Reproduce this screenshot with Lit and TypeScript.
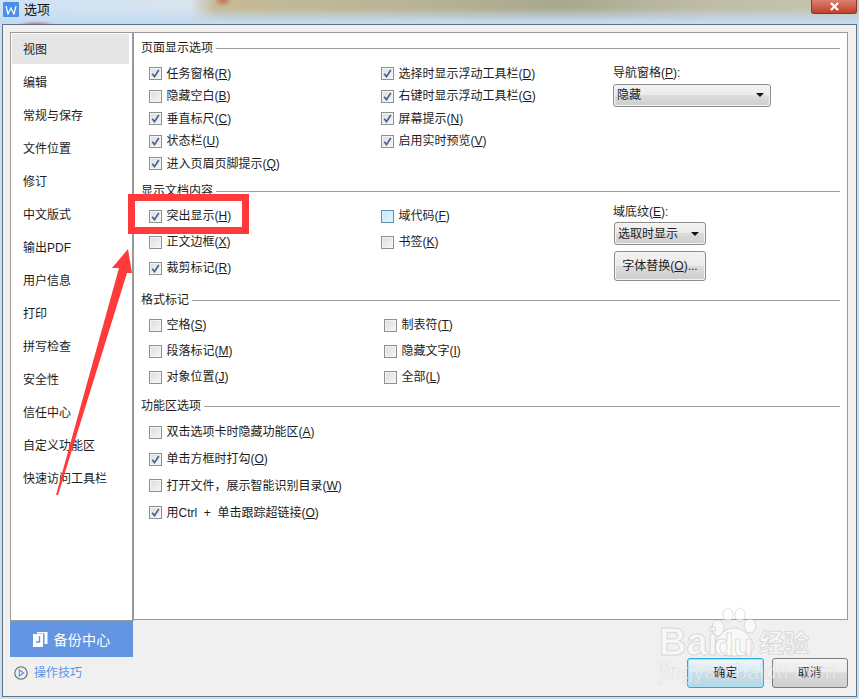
import { LitElement, html, css, nothing } from "lit";
import { customElement } from "lit/decorators.js";

const nav = ["视图","编辑","常规与保存","文件位置","修订","中文版式","输出PDF","用户信息","打印","拼写检查","安全性","信任中心","自定义功能区","快速访问工具栏"];

const check = (label: string, key: string, on: boolean, hover = false) => html`
  <div class="row">
    <span class="cb ${hover ? "hover" : ""}">
      ${on ? html`<svg viewBox="0 0 9 9" width="9" height="9"><path d="M1.2 4.8 L3.5 7.6 L7.8 1" fill="none" stroke="#4a5f98" stroke-width="1.7"/></svg>` : nothing}
    </span>
    <span class="lb">${label}(<u>${key}</u>)</span>
  </div>`;

@customElement("app-root")
export class AppRoot extends LitElement {
  static styles = css`
    :host { display: block; width: 859px; height: 699px; overflow: hidden; position: relative;
      font-family: "Liberation Sans", "Noto Sans CJK SC", sans-serif; font-size: 12px; color: #1c1c1c; }
    .page { width: 859px; height: 699px; display: flex; flex-direction: column; box-sizing: border-box;
      background: #c9dff2; }
    .title { height: 24px; flex: none; display: flex; align-items: flex-start; padding-left: 3px; gap: 5px;
      background:
        radial-gradient(ellipse 9px 7px at 223px 0, rgba(196,92,62,.8), rgba(196,92,62,0)),
        radial-gradient(ellipse 20px 3px at 36px 24px, rgba(200,70,80,.65), rgba(200,70,80,0)),
        linear-gradient(180deg, rgba(201,223,242,0) 0, rgba(201,223,242,0) 8px, #c3dbf1 22px),
        linear-gradient(90deg, #cfe2f4 0, #d8e4ee 190px, #c6bb96 215px, #b9b395 420px, #a9a88e 560px, #bfbca6 700px, #c6c6b2 859px); }
    .wicon { width: 16px; height: 15px; margin-top: 2px; background: #4a90e8; border-radius: 1px; color: #fff;
      display: flex; align-items: center; justify-content: center; }
    .ttl { font-size: 13px; line-height: 18px; margin-top: 1px; color: #111; flex: 1; }
    .close { width: 46px; height: 14px; margin-right: 2px; border: 1px solid #7d3b30; border-top: none; box-sizing: border-box;
      border-radius: 0 0 3px 3px; background: linear-gradient(180deg, #d9816f, #c2402a); display: flex; align-items: center; justify-content: center; }
    .dialog { flex: 1; margin: 0 2px 2px 2px; border: 1px solid #66727f; background: #f0f0f0;
      padding: 7px 8px 0 7px; display: flex; flex-direction: column; box-sizing: border-box; min-height: 0; }
    .main { display: flex; height: 589px; flex: none; }
    .side { width: 124px; flex: none; height: 589px; box-sizing: border-box; border: 1px solid #9a9a9a; border-right: 2px solid #9a9a9a;
      background: #fff; padding: 1px 3px 0 1px; }
    .nav { height: 33px; display: flex; align-items: center; padding-left: 11px; box-sizing: border-box; line-height: 1; }
    .nav.on { height: 30px; margin-bottom: 2px; padding-top: 1px; background: #e6e6e6; }
    .content { flex: 1; height: 588px; box-sizing: border-box; border: 1px solid #9a9a9a; border-left: none; background: #fff; padding: 7px 7px 0 7px; }
    .sec { display: flex; flex-direction: column; }
    .s1 { height: 143px; } .s2 { height: 109px; } .s3 { height: 106px; }
    .head { height: 16px; display: flex; align-items: center; gap: 3px; line-height: 16px; flex: none; }
    .head i { flex: 1; height: 1px; background: #a0a0a0; }
    .grid { display: grid; padding-left: 8px; }
    .s1 .grid { margin-top: 6.4px; grid-template-columns: 232px 232px 1fr; }
    .s2 .grid { margin-top: 4px; grid-template-columns: 232px 232px 1fr; }
    .s3 .grid { margin-top: 4px; grid-template-columns: 235px 1fr; }
    .s4 .grid { margin-top: 5px; grid-template-columns: 1fr; grid-auto-rows: 26.8px; }
    .col { display: grid; align-content: start; }
    .s1 .col { grid-auto-rows: 22.5px; }
    .s2 .col, .s3 .col { grid-auto-rows: 26px; }
    .row { display: flex; align-items: center; gap: 4.5px; line-height: 1; white-space: nowrap; }
    .cb { width: 13px; height: 13px; flex: none; box-sizing: border-box; border: 1px solid #8e8f8f;
      background: linear-gradient(135deg, #dcdcdc, #f6f6f6); box-shadow: inset 0 0 0 1px #f4f4f4;
      display: flex; align-items: center; justify-content: center; }
    .cb.hover { border-color: #5b93b3; background: linear-gradient(135deg, #c5e6f7, #e9f6fd); box-shadow: inset 0 0 0 1px #d5effc; }
    u { text-underline-offset: 1px; }
    .opt { display: flex; flex-direction: column; align-items: flex-start; }
    .s1 .opt { margin-top: 2.6px; }
    .s2 .opt { margin-top: 1px; }
    .optlb { line-height: 16px; flex: none; }
    .select { height: 23px; flex: none; box-sizing: border-box; border: 1px solid #8b8b8b; border-radius: 3px; display: flex; align-items: center;
      padding: 0 6px 0 3px; justify-content: space-between; line-height: 1;
      background: linear-gradient(180deg, #f2f2f2 0, #ebebeb 48%, #dcdcdc 50%, #cdcdcd 100%); box-shadow: inset 0 0 0 1px #f6f6f6; }
    .s1 .select { width: 158px; margin-top: 3px; }
    .s2 .select { width: 92px; margin: 2px 0 0 1px; }
    .tri { width: 0; height: 0; border-left: 4px solid transparent; border-right: 4px solid transparent; border-top: 4px solid #111; }
    .btn { width: 92px; height: 30px; flex: none; box-sizing: border-box; border: 1px solid #8b8b8b; border-radius: 3px; margin: 6px 0 0 1px;
      display: flex; align-items: center; justify-content: center; line-height: 1;
      background: linear-gradient(180deg, #f2f2f2 0, #ebebeb 48%, #dcdcdc 50%, #cdcdcd 100%); box-shadow: inset 0 0 0 1px #f6f6f6; }
    .backup { height: 36px; background: #6495e2; color: #fff; font-size: 14px; letter-spacing: .2px;
      display: flex; align-items: center; justify-content: center; gap: 6px; }
    .bottom { display: flex; flex: 1; align-items: flex-start; }
    .tips { width: 123px; height: 71px; flex: none; }
    .foot { display: flex; flex: 1; justify-content: flex-end; gap: 8px; padding-top: 37px; }
    .tiplink { display: flex; align-items: center; gap: 6px; padding: 9px 0 0 4px; color: #5b95e8; line-height: 1; }
    .act { width: 76.5px; height: 30px; box-sizing: border-box; border: 1px solid #7b7b7b; border-radius: 3px;
      display: flex; align-items: center; justify-content: center; line-height: 1;
      background: linear-gradient(180deg, #f4f4f4 0, #ececec 45%, #dbdbdb 50%, #cfcfcf 100%); }
    .act.def { border-color: #29a8e0; background: linear-gradient(180deg, #eef6fa 0, #dcecf4 45%, #c8dfea 50%, #b8d6e4 100%);
      box-shadow: inset 0 0 0 1px #a8e4f8; }
    .ink { position: absolute; left: 0; top: 0; width: 859px; height: 699px; pointer-events: none; }
    .mark { position: absolute; left: 659px; top: 606px; pointer-events: none; width: 170px; height: 84px; color: rgba(255,255,255,.5); }
    .mark .bd { position: absolute; left: 0; top: 16px; font: bold 38px/40px "Liberation Sans", sans-serif;
      -webkit-text-stroke: 1px rgba(175,175,175,.4); white-space: nowrap; }
    .mark .du { position: absolute; left: 55px; top: 21px; font: bold 32px/36px "Liberation Sans", sans-serif;
      -webkit-text-stroke: 1px rgba(175,175,175,.4); white-space: nowrap; }
    .mark .jy { position: absolute; left: 0; top: 54px; font: 22px/24px "Liberation Sans", sans-serif;
      -webkit-text-stroke: .6px rgba(175,175,175,.35); white-space: nowrap; }
    .mark .cn { position: absolute; left: 100px; top: 20px; font: bold 25px/30px "Noto Sans CJK SC", sans-serif;
      -webkit-text-stroke: 1px rgba(175,175,175,.4); white-space: nowrap; }
    .mark svg { position: absolute; left: 50px; top: 0; }
    .hl { position: absolute; left: 128px; top: 194px; width: 121px; height: 40px; box-sizing: border-box; border: 7px solid #ff3a3a; }
  `;

  render() {
    return html`
      <div class="page">
        <div class="title">
          <span class="wicon"><svg width="12" height="10" viewBox="0 0 12 10"><path d="M1 1 L3 9 L6 3 L9 9 L11 1" fill="none" stroke="#fff" stroke-width="1.2"/></svg></span>
          <span class="ttl">选项</span>
          <span class="close"><svg width="11" height="9" viewBox="0 0 11 9"><path d="M2 1 L9 8 M9 1 L2 8" stroke="#fff" stroke-width="2.2"/></svg></span>
        </div>
        <div class="dialog">
          <div class="main">
            <div class="side">
              ${nav.map((n, i) => html`<div class="nav ${i === 0 ? "on" : ""}">${n}</div>`)}
            </div>
            <div class="content">
              <section class="sec s1">
                <div class="head">页面显示选项<i></i></div>
                <div class="grid">
                  <div class="col">
                    ${check("任务窗格","R",true)}${check("隐藏空白","B",false)}${check("垂直标尺","C",true)}${check("状态栏","U",true)}${check("进入页眉页脚提示","Q",true)}
                  </div>
                  <div class="col">
                    ${check("选择时显示浮动工具栏","D",true)}${check("右键时显示浮动工具栏","G",true)}${check("屏幕提示","N",true)}${check("启用实时预览","V",true)}
                  </div>
                  <div class="opt">
                    <span class="optlb">导航窗格(<u>P</u>):</span>
                    <div class="select"><span>隐藏</span><span class="tri"></span></div>
                  </div>
                </div>
              </section>
              <section class="sec s2">
                <div class="head">显示文档内容<i></i></div>
                <div class="grid">
                  <div class="col">${check("突出显示","H",true)}${check("正文边框","X",false)}${check("裁剪标记","R",true)}</div>
                  <div class="col">${check("域代码","F",false,true)}${check("书签","K",false)}</div>
                  <div class="opt">
                    <span class="optlb">域底纹(<u>E</u>):</span>
                    <div class="select"><span>选取时显示</span><span class="tri"></span></div>
                    <div class="btn"><span>字体替换(<u>O</u>)...</span></div>
                  </div>
                </div>
              </section>
              <section class="sec s3">
                <div class="head">格式标记<i></i></div>
                <div class="grid">
                  <div class="col">${check("空格","S",false)}${check("段落标记","M",false)}${check("对象位置","J",false)}</div>
                  <div class="col">${check("制表符","T",false)}${check("隐藏文字","I",false)}${check("全部","L",false)}</div>
                </div>
              </section>
              <section class="sec s4">
                <div class="head">功能区选项<i></i></div>
                <div class="grid">
                  ${check("双击选项卡时隐藏功能区","A",false)}${check("单击方框时打勾","O",true)}${check("打开文件，展示智能识别目录","W",false)}${check("用Ctrl\u00a0 +\u00a0 单击跟踪超链接","O",true)}
                </div>
              </section>
            </div>
          </div>
          <div class="bottom">
            <div class="tips">
              <div class="backup">
                <svg width="15" height="16" viewBox="0 0 15 16"><path d="M0 3 H10 V16 H0 Z" fill="#fff"/><path d="M4 1 H14.5 V13 H11.5 V2.5 H4 Z" fill="#fff"/><path d="M6.5 5 V11 H3" fill="none" stroke="#6495e2" stroke-width="1.4"/></svg>
                <span>备份中心</span>
              </div>
              <div class="tiplink">
                <svg width="14" height="14" viewBox="0 0 14 14"><circle cx="7" cy="7" r="6.2" fill="none" stroke="#666" stroke-width="1.1"/><path d="M5.3 4 L9.6 7 L5.3 10 Z" fill="none" stroke="#5b95e8" stroke-width="1.2"/></svg>
                <span>操作技巧</span>
              </div>
            </div>
            <div class="foot">
              <div class="act def">确定</div>
              <div class="act">取消</div>
            </div>
          </div>
        </div>
      </div>
      <div class="mark">
        <svg width="50" height="52" viewBox="0 0 50 52" fill="rgba(255,255,255,.5)" stroke="rgba(175,175,175,.4)">
          <ellipse cx="9" cy="22" rx="6" ry="8"/><ellipse cx="19" cy="9" rx="5" ry="7"/><ellipse cx="31" cy="9" rx="5" ry="7"/><ellipse cx="41" cy="20" rx="6" ry="7"/>
          <path d="M25 22 C14 22 3 36 6 44 C12 52 38 52 44 44 C47 36 36 22 25 22 Z"/>
        </svg>
        <span class="bd">Bai</span>
        <span class="du">du</span>
        <span class="cn">经验</span>
        <span class="jy">jingyan.baidu.com</span>
      </div>
      <div class="hl"></div>
      <svg class="ink" viewBox="0 0 859 699">
        <path d="M128 249 L132 273 L127 273 L58 495 L56 495 L119 268 L112 268 Z" fill="#ff3a3a"/>
      </svg>
    `;
  }
}
